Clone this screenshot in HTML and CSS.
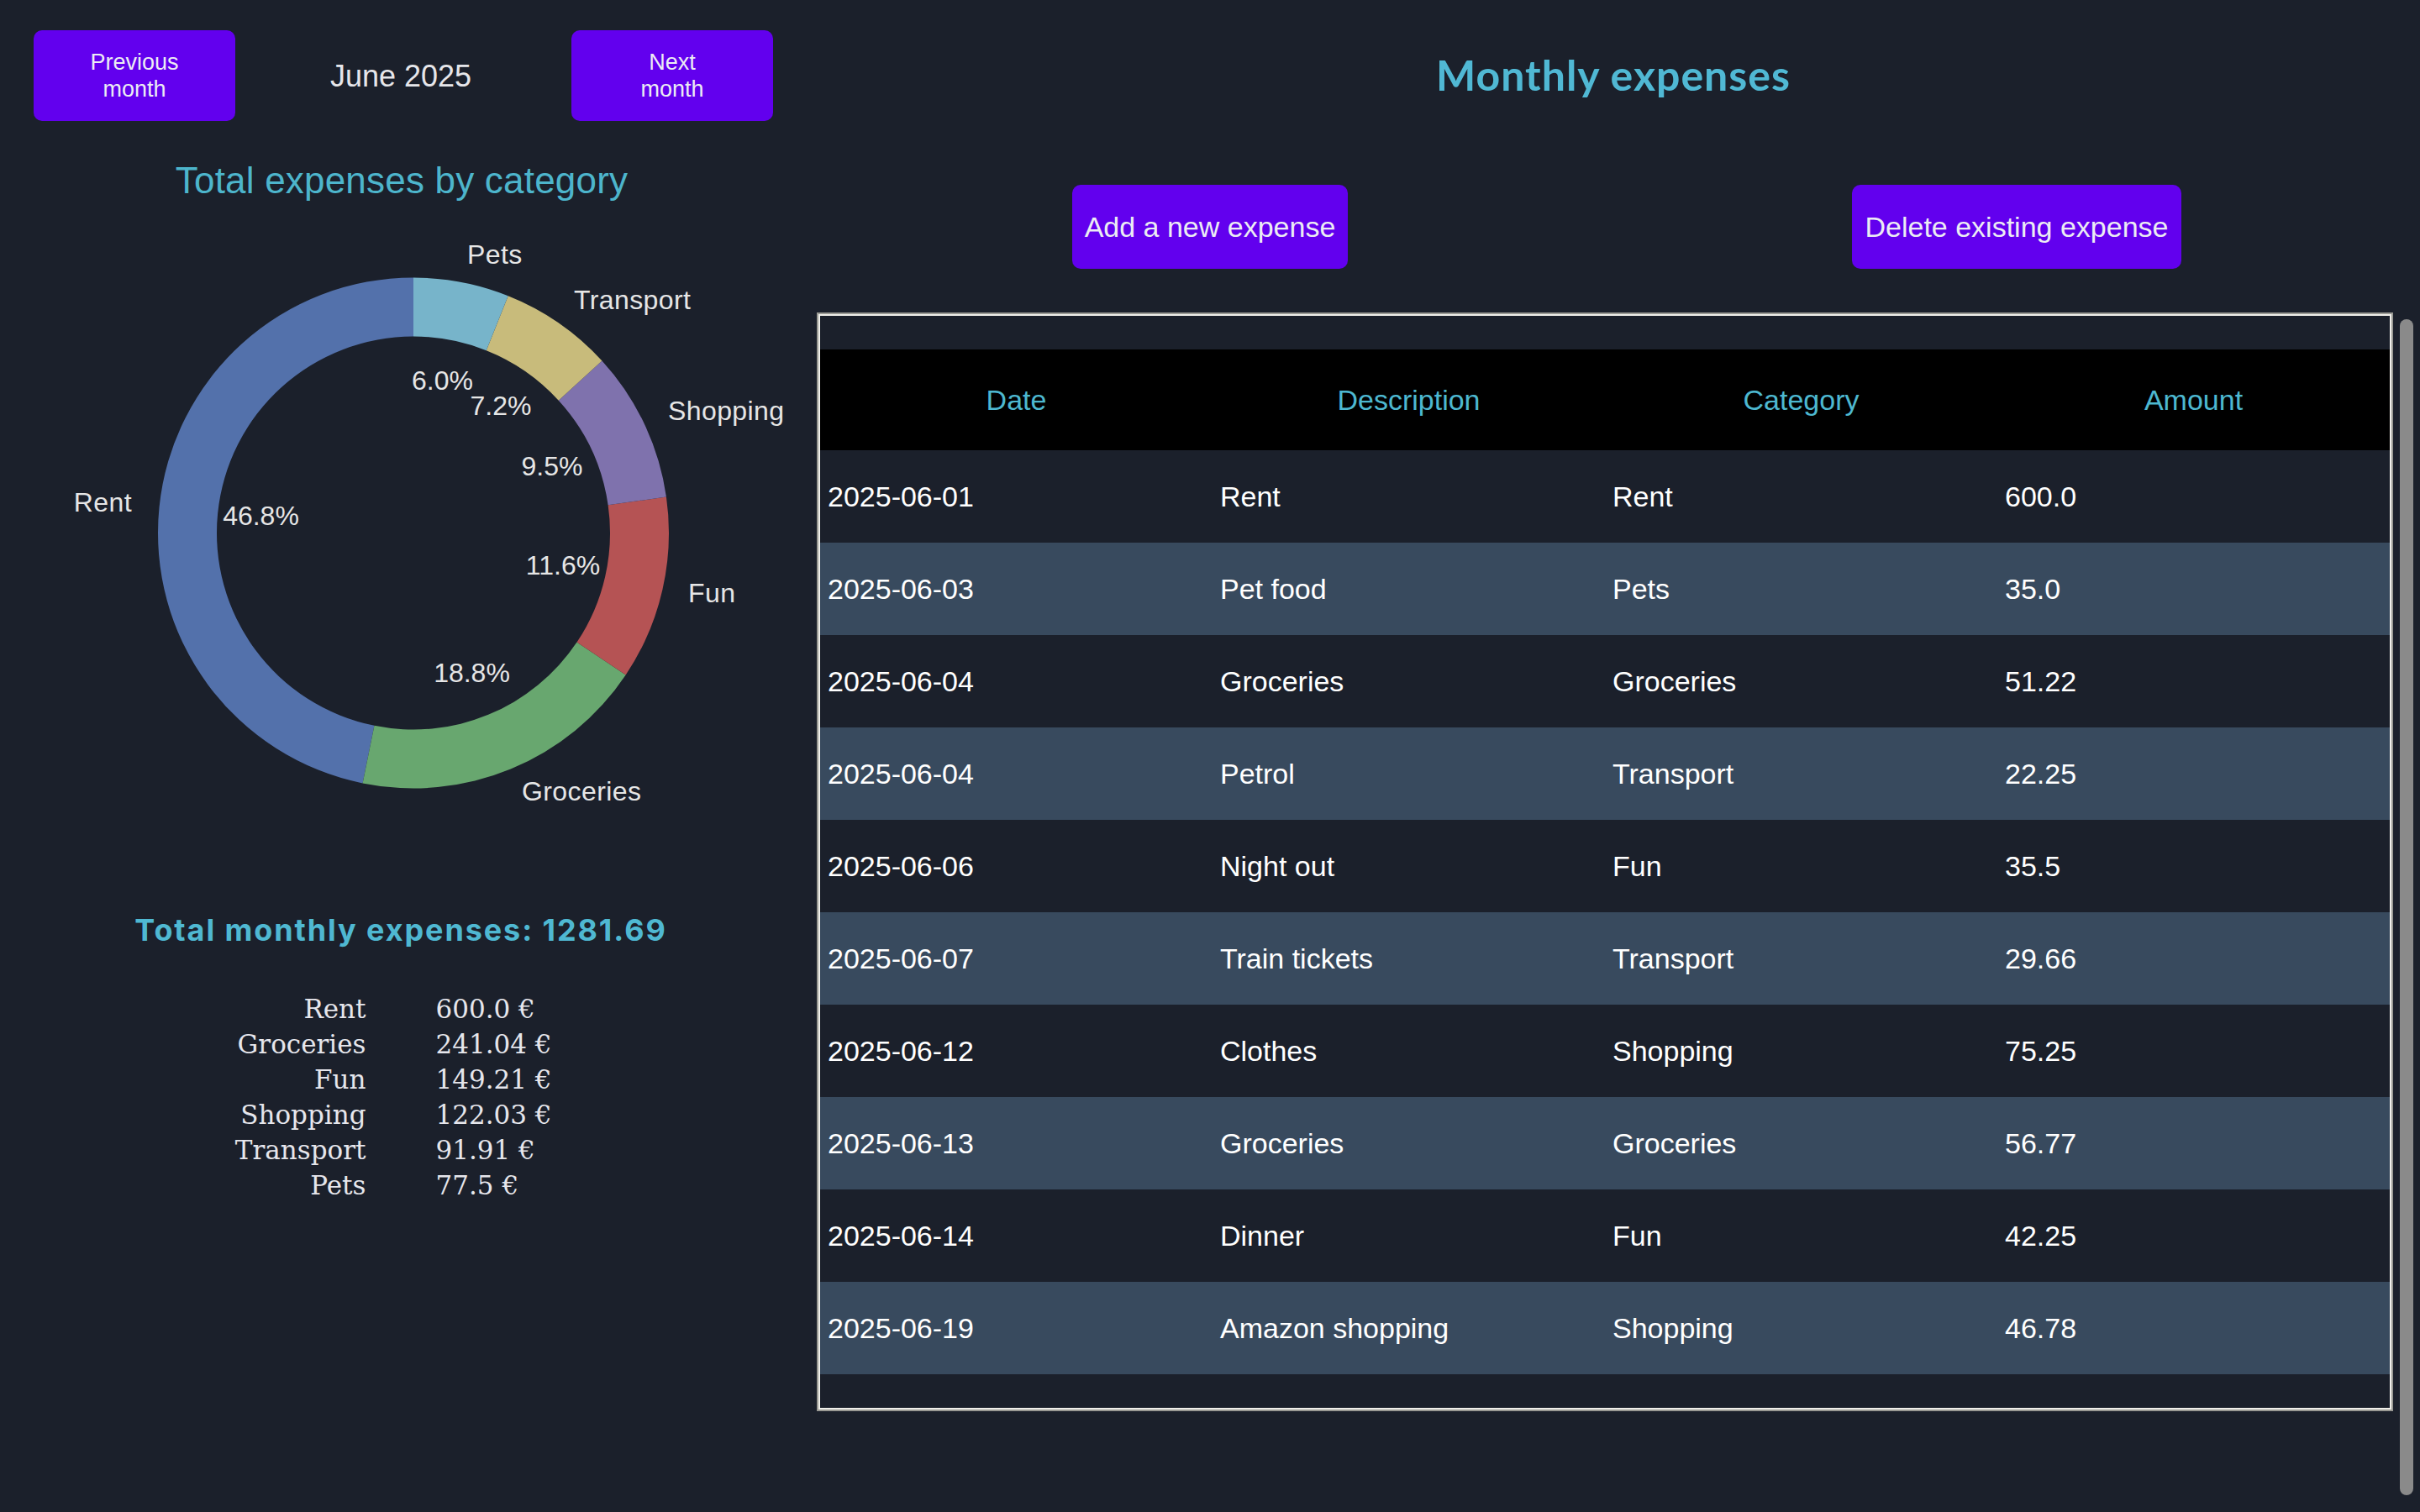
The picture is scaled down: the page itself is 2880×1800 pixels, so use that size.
FILE: index.html
```html
<!DOCTYPE html>
<html lang="en">
<head>
<meta charset="utf-8">
<title>Monthly expenses</title>
<link rel="stylesheet" href="styles.css">
</head>
<body>
<main class="layout">
  <section class="summary">
    <div class="month-nav">
      <button class="nav-btn"><span>Previous</span><span>month</span></button>
      <div class="month-label">June 2025</div>
      <button class="nav-btn"><span>Next</span><span>month</span></button>
    </div>
    <h2 class="chart-title">Total expenses by category</h2>
    <svg class="donut" viewBox="0 0 960 720" width="960" height="720">
      <path fill="#5371ab" d="M 492 70.5 A 304 304 0 0 0 431.55 672.43 L 445.47 603.83 A 234 234 0 0 1 492 140.5 Z"/>
      <path fill="#68a76f" d="M 431.55 672.43 A 304 304 0 0 0 744.70 543.48 L 686.51 504.57 A 234 234 0 0 1 445.47 603.83 Z"/>
      <path fill="#b55354" d="M 744.70 543.48 A 304 304 0 0 0 792.93 331.46 L 723.64 341.37 A 234 234 0 0 1 686.51 504.57 Z"/>
      <path fill="#7f72ad" d="M 792.93 331.46 A 304 304 0 0 0 716.41 169.44 L 664.74 216.66 A 234 234 0 0 1 723.64 341.37 Z"/>
      <path fill="#c8bb7b" d="M 716.41 169.44 A 304 304 0 0 0 604.70 92.17 L 578.75 157.18 A 234 234 0 0 1 664.74 216.66 Z"/>
      <path fill="#77b4ca" d="M 604.70 92.17 A 304 304 0 0 0 492 70.5 L 492 140.5 A 234 234 0 0 1 578.75 157.18 Z"/>
      <g class="wedge-label">
        <text x="157" y="338" text-anchor="end">Rent</text>
        <text x="621" y="682" text-anchor="start">Groceries</text>
        <text x="819" y="446" text-anchor="start">Fun</text>
        <text x="795" y="229" text-anchor="start">Shopping</text>
        <text x="683" y="97" text-anchor="start">Transport</text>
        <text x="556" y="43" text-anchor="start">Pets</text>
      </g>
      <g class="wedge-pct">
        <text x="310.5" y="354">46.8%</text>
        <text x="561.5" y="541">18.8%</text>
        <text x="670" y="413">11.6%</text>
        <text x="657" y="294.5">9.5%</text>
        <text x="596" y="222.5">7.2%</text>
        <text x="526.5" y="193">6.0%</text>
      </g>
    </svg>
    <h3 class="total">Total monthly expenses: 1281.69</h3>
    <div class="breakdown">
      <span class="cat">Rent</span><span class="amt">600.0 €</span>
      <span class="cat">Groceries</span><span class="amt">241.04 €</span>
      <span class="cat">Fun</span><span class="amt">149.21 €</span>
      <span class="cat">Shopping</span><span class="amt">122.03 €</span>
      <span class="cat">Transport</span><span class="amt">91.91 €</span>
      <span class="cat">Pets</span><span class="amt">77.5 €</span>
    </div>
  </section>

  <section class="expenses">
    <h1 class="page-title">Monthly expenses</h1>
    <div class="actions">
      <div class="action-cell"><button class="action-btn">Add a new expense</button></div>
      <div class="action-cell"><button class="action-btn">Delete existing expense</button></div>
    </div>
    <div class="table-frame">
      <table class="expense-table">
        <thead>
          <tr><th>Date</th><th>Description</th><th>Category</th><th>Amount</th></tr>
        </thead>
        <tbody>
          <tr><td>2025-06-01</td><td>Rent</td><td>Rent</td><td>600.0</td></tr>
          <tr><td>2025-06-03</td><td>Pet food</td><td>Pets</td><td>35.0</td></tr>
          <tr><td>2025-06-04</td><td>Groceries</td><td>Groceries</td><td>51.22</td></tr>
          <tr><td>2025-06-04</td><td>Petrol</td><td>Transport</td><td>22.25</td></tr>
          <tr><td>2025-06-06</td><td>Night out</td><td>Fun</td><td>35.5</td></tr>
          <tr><td>2025-06-07</td><td>Train tickets</td><td>Transport</td><td>29.66</td></tr>
          <tr><td>2025-06-12</td><td>Clothes</td><td>Shopping</td><td>75.25</td></tr>
          <tr><td>2025-06-13</td><td>Groceries</td><td>Groceries</td><td>56.77</td></tr>
          <tr><td>2025-06-14</td><td>Dinner</td><td>Fun</td><td>42.25</td></tr>
          <tr><td>2025-06-19</td><td>Amazon shopping</td><td>Shopping</td><td>46.78</td></tr>
        </tbody>
      </table>
    </div>
    <div class="scroll-thumb"></div>
  </section>
</main>
</body>
</html>
```

FILE: styles.css
```css
html, body {
  margin: 0;
  padding: 0;
  height: 1800px;
  overflow: hidden;
  background: #1b202b;
  font-family: "Liberation Sans", Arial, Helvetica, sans-serif;
  color: #e8e8ee;
}

.layout {
  display: grid;
  grid-template-columns: 960px 1920px;
  height: 1800px;
}

/* ---------- left column ---------- */
.summary {
  display: flex;
  flex-direction: column;
  align-items: center;
}

.month-nav {
  box-sizing: border-box;
  width: 960px;
  padding: 36px 40px 0;
  display: flex;
  justify-content: space-between;
  align-items: center;
}

.nav-btn {
  width: 240px;
  height: 108px;
  border: none;
  border-radius: 10px;
  background: #6200ee;
  color: #ececf4;
  font-family: "Liberation Sans", Arial, sans-serif;
  font-size: 27px;
  line-height: 32px;
  display: flex;
  flex-direction: column;
  align-items: center;
  justify-content: center;
  padding: 0;
}

.month-label {
  font-size: 36px;
  color: #e6e6ea;
  margin-right: 6px;
  padding-top: 2px;
}

.chart-title {
  margin: 46px 4px 0 0;
  font-size: 44px;
  line-height: 50px;
  font-weight: normal;
  color: #4db5cc;
  letter-spacing: 0.2px;
}

.donut {
  display: block;
  margin-top: 20px;
}

.wedge-label text,
.wedge-pct text {
  font-family: "Liberation Sans", Arial, sans-serif;
  font-size: 32px;
  fill: #e6e6e6;
  dominant-baseline: central;
}

.wedge-label text {
  letter-spacing: 0.4px;
}

.wedge-pct text {
  text-anchor: middle;
}

.total {
  margin: 106px 6px 0 0;
  font-family: Inter, "Open Sans", sans-serif;
  font-weight: 700;
  font-size: 36px;
  line-height: 42px;
  letter-spacing: 1.9px;
  color: #4fb8d2;
}

.breakdown {
  box-sizing: border-box;
  width: 954px;
  margin: 52px 6px 0 0;
  display: grid;
  grid-template-columns: 1fr 1fr;
  column-gap: 83px;
  font-family: "DejaVu Serif", "Liberation Serif", serif;
  font-size: 31px;
  line-height: 42px;
  color: #e6e6ec;
}

.breakdown .cat {
  text-align: right;
}

.breakdown .amt {
  text-align: left;
}

/* ---------- right column ---------- */
.expenses {
  position: relative;
  display: flex;
  flex-direction: column;
}

.page-title {
  margin: 59px 0 0;
  text-align: center;
  font-family: Lato, "Open Sans", sans-serif;
  font-weight: 700;
  font-size: 50px;
  line-height: 60px;
  letter-spacing: 1px;
  color: #50b8d4;
}

.actions {
  margin-top: 101px;
  display: grid;
  grid-template-columns: 1fr 1fr;
}

.action-cell {
  display: flex;
  justify-content: center;
}

.action-btn {
  height: 100px;
  padding: 0 15px;
  border: none;
  border-radius: 10px;
  background: #6200ee;
  color: #ececf4;
  font-family: "Liberation Sans", Arial, sans-serif;
  font-size: 34px;
}

.table-frame {
  box-sizing: border-box;
  width: 1872px;
  margin: 54px 0 0 14px;
  padding: 40px 0;
  border: 2px solid #f0efea;
  outline: 2px solid #9a9a94;
}

.expense-table {
  width: 100%;
  border-collapse: collapse;
  table-layout: fixed;
  font-family: "Liberation Sans", Arial, sans-serif;
  font-size: 34px;
}

.expense-table th {
  height: 120px;
  padding: 0;
  background: #000;
  color: #4db8d0;
  font-weight: normal;
  text-align: center;
}

.expense-table td {
  height: 110px;
  padding: 0 0 0 9px;
  color: #ffffff;
  text-align: left;
}

.expense-table tbody tr:nth-child(even) td {
  background: #384a5e;
}

.scroll-thumb {
  position: absolute;
  top: 380px;
  right: 8px;
  width: 16px;
  height: 1400px;
  border-radius: 8px;
  background: #8a8a8a;
}
```
